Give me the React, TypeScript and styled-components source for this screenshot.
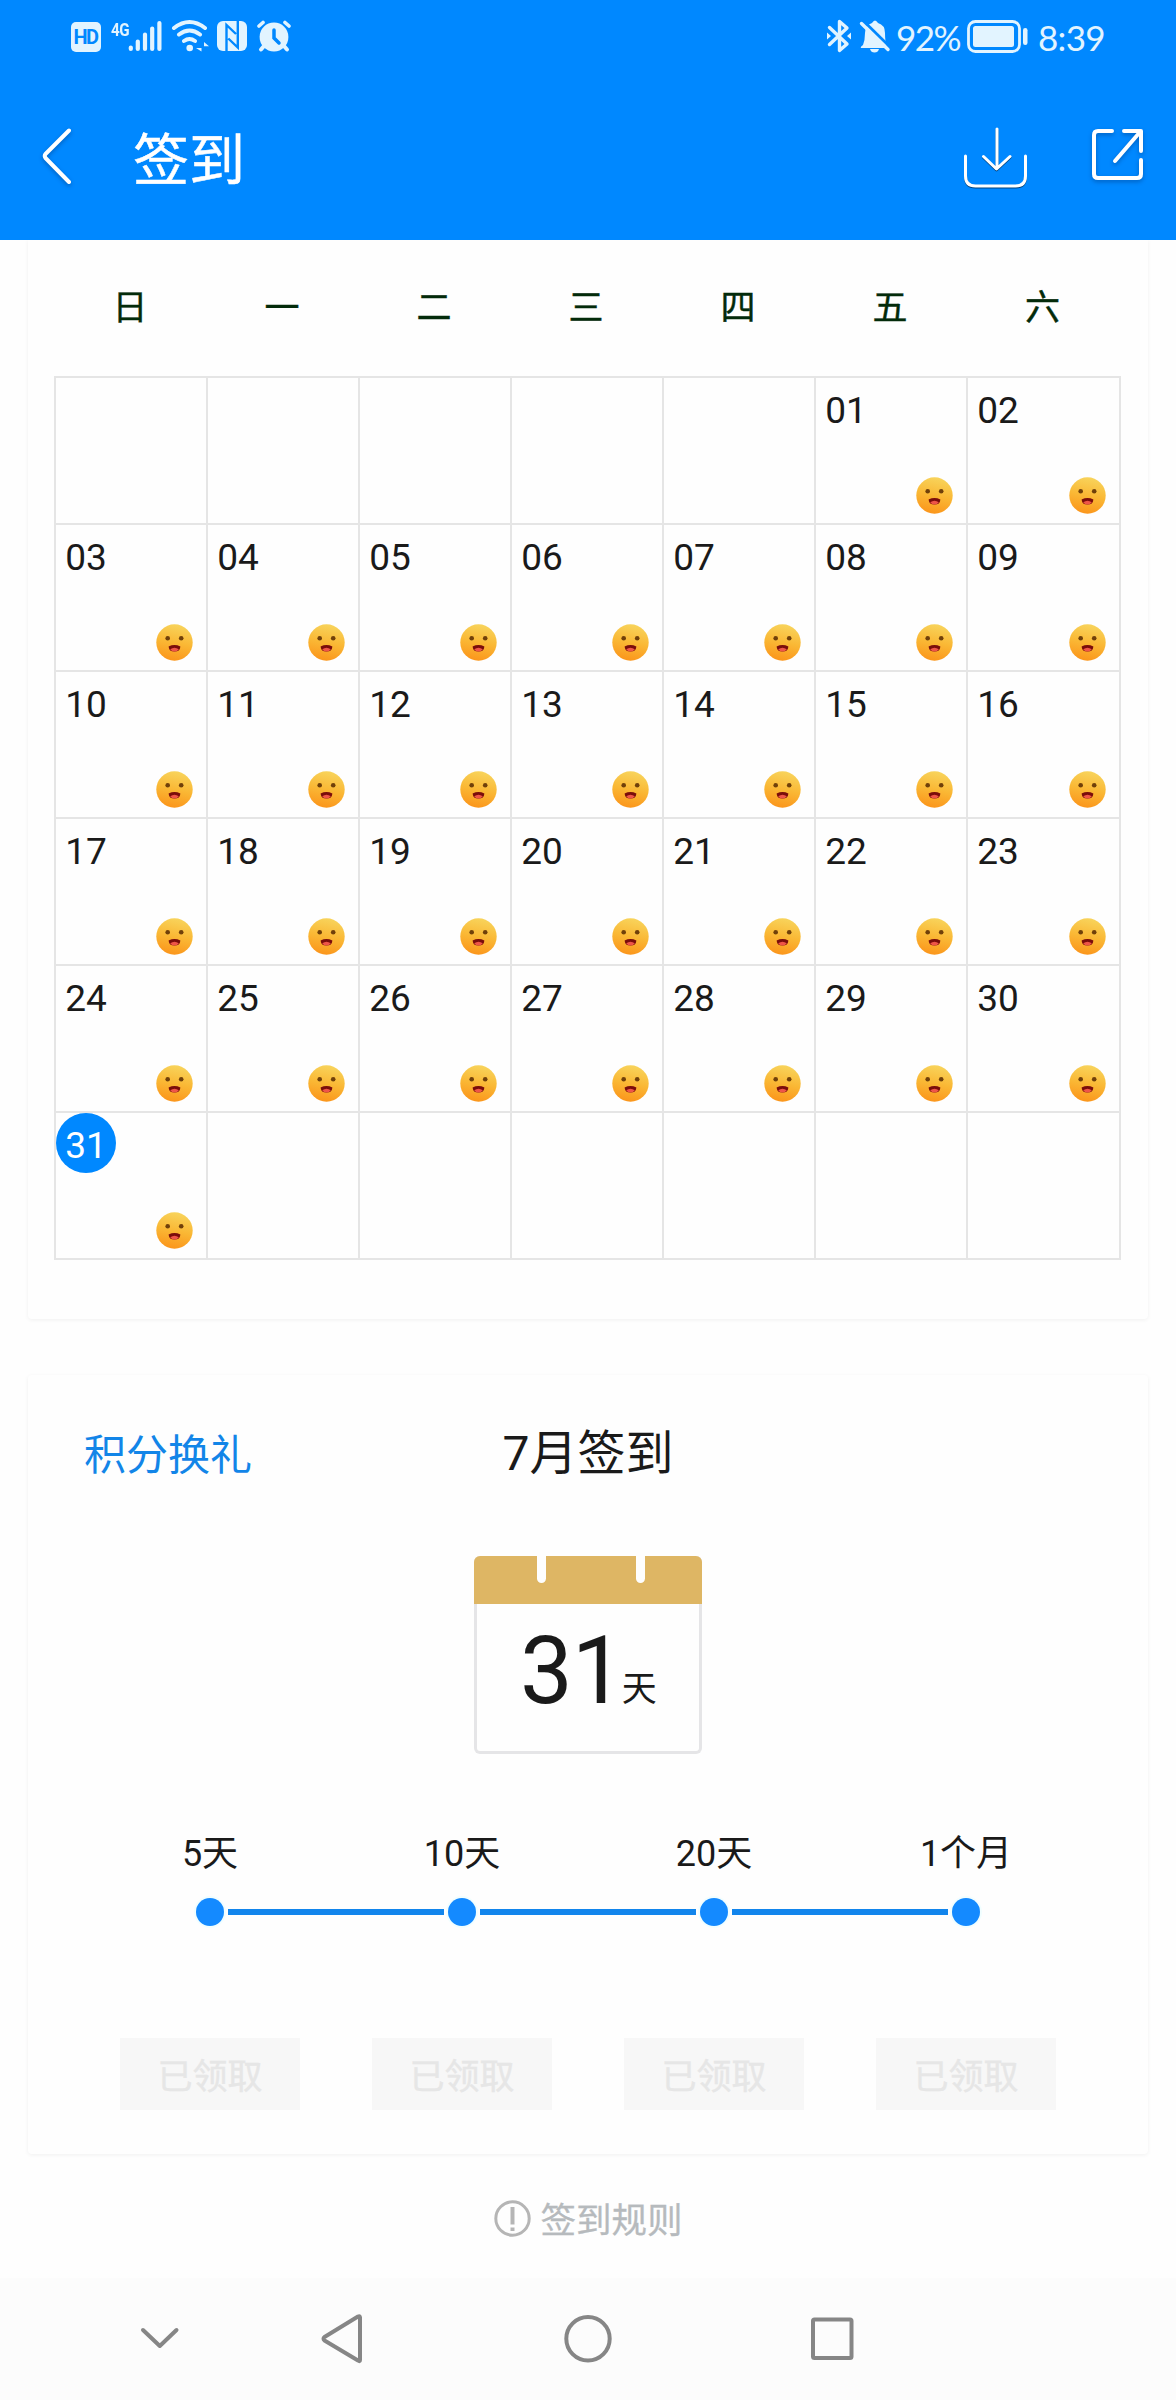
import React from "react";
import styled, { createGlobalStyle } from "styled-components";

const BLUE = "#0088ff";
const INK = "#1a1a1a";
const PALE = "#e2f4ff";

const GlobalStyle = createGlobalStyle`
  * { box-sizing: border-box; }
  body { margin: 0; background: #fefefe; }
`;

const Screen = styled.div`
  width: 1176px;
  height: 2400px;
  display: flex;
  flex-direction: column;
  background: #fefefe;
  color: ${INK};
  font-family: "Noto Sans CJK SC", sans-serif;
  font-size: 36px;
  overflow: hidden;
`;

const StatusBar = styled.div`
  height: 72px;
  flex: none;
  display: flex;
  align-items: flex-start;
  padding: 18px 73px 0 70px;
  background: ${BLUE};
  color: ${PALE};
`;

const StatusIcon = styled.svg<{ $gap?: number }>`
  display: block;
  flex: none;
  height: 36px;
  margin-left: ${(p) => p.$gap ?? 0}px;
`;

const HdBadge = styled.div`
  width: 30px;
  height: 30px;
  margin: 4px 0 0 1px;
  border-radius: 5px;
  background: ${PALE};
  color: ${BLUE};
  font: 700 20px/31px Roboto, sans-serif;
  letter-spacing: -1.5px;
  text-indent: -1px;
  text-align: center;
`;

const NetworkType = styled.div`
  width: 18px;
  margin: 2px 0 0 10px;
  font: 700 19px/19px "Roboto", sans-serif;
  letter-spacing: -0.5px;
  transform: scaleX(0.8);
  transform-origin: left;
`;

const Spacer = styled.div`
  flex: 1;
`;

const StatusText = styled.div<{ $width: number; $gap: number; $track: number }>`
  width: ${(p) => p.$width}px;
  margin-left: ${(p) => p.$gap}px;
  font: 400 35px/38px Lato, sans-serif;
  letter-spacing: ${(p) => p.$track}px;
  white-space: nowrap;
`;

const Header = styled.header`
  height: 168px;
  flex: none;
  display: flex;
  align-items: center;
  padding: 0 28px 0 38px;
  background: ${BLUE};
  color: #fff;
`;

const HeaderIcon = styled.svg<{ $hard?: boolean; $gap?: number }>`
  display: block;
  flex: none;
  height: 72px;
  margin-left: ${(p) => p.$gap ?? 0}px;
  filter: ${(p) =>
    p.$hard
      ? "drop-shadow(0 1.5px 0.5px rgba(0, 30, 60, 0.65))"
      : "drop-shadow(0 2px 2px rgba(0, 30, 80, 0.35))"};
`;

const Title = styled.h1`
  flex: 1;
  margin: 0 0 0 57px;
  font-size: 56px;
  font-weight: 400;
  line-height: 80px;
  -webkit-text-stroke: 0.5px #fff;
`;

const Card = styled.section<{ $first?: boolean }>`
  flex: none;
  margin: ${(p) => (p.$first ? "0 28px" : "56px 28px 0")};
  height: ${(p) => (p.$first ? 1079 : 779)}px;
  padding: 0 26px;
  border-radius: ${(p) => (p.$first ? "0 0 4px 4px" : "4px")};
  background: #fefefe;
  box-shadow: 0 1px 4px rgba(0, 0, 0, 0.06);
`;

const Content = styled.main`
  height: 2038px;
  flex: none;
  overflow: hidden;
`;

const COLUMNS = "repeat(6, 152px) 153px";

const Weekdays = styled.div`
  display: grid;
  grid-template-columns: ${COLUMNS};
  height: 136px;
  color: #032b0a;
  font-size: 35px;
  line-height: 129px;
  text-align: center;
  -webkit-text-stroke: 0.4px #032b0a;
`;

const MonthGrid = styled.div`
  width: 1067px;
  display: grid;
  grid-template-columns: ${COLUMNS};
  grid-auto-rows: 147px;
  border-top: 2px solid #e5e5e5;
  border-left: 2px solid #e5e5e5;
`;

const DayCell = styled.div`
  display: flex;
  justify-content: space-between;
  align-items: flex-start;
  border-right: 2px solid #e5e5e5;
  border-bottom: 2px solid #e5e5e5;
`;

const DayNumber = styled.span<{ $today: boolean }>`
  width: 60px;
  height: 60px;
  border-radius: 50%;
  background: ${(p) => (p.$today ? BLUE : "transparent")};
  color: ${(p) => (p.$today ? "#fff" : INK)};
  font-family: Roboto, sans-serif;
  font-size: 37px;
  line-height: 65px;
  text-align: center;
`;

const Smile = styled.svg`
  align-self: flex-end;
  width: 37px;
  height: 37px;
  margin: 0 13px 9px 0;
`;

const SummaryHead = styled.div`
  display: grid;
  grid-template-columns: 1fr auto 1fr;
  align-items: center;
  height: 154px;
  padding-left: 30px;
`;

const GiftLink = styled.a`
  color: #1285e8;
  font-size: 42px;
  line-height: 60px;
  margin-top: -1px;
`;

const MonthTitle = styled.h2`
  margin: 4px 30px 0 0;
  font-family: Roboto, "Noto Sans CJK SC", sans-serif;
  font-size: 48px;
  font-weight: 400;
  line-height: 70px;
`;

const CalendarBadge = styled.div`
  width: 228px;
  height: 198px;
  margin: 27px auto 0;
  border-radius: 6px;
  border: 3px solid #e5e5e7;
  border-top: 0;
`;

const CalendarTop = styled.div`
  height: 48px;
  margin: 0 -3px;
  padding: 0 57px 0 63px;
  display: flex;
  justify-content: space-between;
  border-radius: 6px 6px 0 0;
  background: #deb664;
`;

const Slot = styled.i`
  width: 9px;
  height: 27px;
  border-radius: 0 0 5px 5px;
  background: #fefefe;
`;

const DayTotal = styled.div`
  display: flex;
  align-items: flex-start;
  height: 144px;
  padding-left: 43px;
`;

const TotalNumber = styled.span`
  font-family: Roboto, sans-serif;
  font-size: 94px;
  line-height: 134px;
  letter-spacing: -1px;
`;

const TotalUnit = styled.span`
  margin-left: -2px;
  font-size: 35px;
  line-height: 163px;
`;

const Steps = styled.div`
  display: grid;
  grid-template-columns: repeat(4, 252px);
  margin-left: 30px;
  padding-top: 72px;
`;

const Step = styled.div`
  display: flex;
  flex-direction: column;
  align-items: center;
`;

const StepLabel = styled.span`
  height: 68px;
  font-family: Roboto, "Noto Sans CJK SC", sans-serif;
  font-size: 36px;
  line-height: 57px;
`;

const Track = styled.div`
  width: 252px;
  height: 36px;
  display: flex;
  align-items: center;
`;

const Rail = styled.i<{ $on: boolean }>`
  flex: 1;
  height: 6px;
  background: ${(p) => (p.$on ? "#1285ec" : "transparent")};
`;

const Dot = styled.i`
  width: 28px;
  height: 28px;
  margin: 0 4px;
  border-radius: 50%;
  background: #148aff;
  box-shadow: 0 0 0 2px #f1feff;
`;

const Claimed = styled.button`
  width: 180px;
  height: 72px;
  margin-top: 108px;
  padding: 0;
  border: 0;
  background: #f7f7f7;
  color: #e6e6e6;
  font: 400 35px/70px "Noto Sans CJK SC", sans-serif;
  -webkit-text-stroke: 0.4px #e6e6e6;
`;

const Rules = styled.div`
  display: flex;
  justify-content: center;
  align-items: center;
  gap: 9px;
  height: 54px;
  margin-top: 37px;
  padding-left: 1px;
  color: #b6babd;
  font-size: 35.5px;
  line-height: 54px;
  -webkit-text-stroke: 0.3px #b6babd;
`;

const NavBar = styled.nav`
  height: 122px;
  flex: none;
  display: flex;
  align-items: center;
  padding: 0 0 0 130px;
  background: #fcfcfc;
`;

const NavIcon = styled.svg<{ $gap?: number }>`
  display: block;
  width: 60px;
  height: 60px;
  margin-left: ${(p) => p.$gap ?? 0}px;
  fill: none;
  stroke: #868686;
  stroke-width: 4;
  stroke-linejoin: round;
  stroke-linecap: round;
`;

const WEEK = ["日", "一", "二", "三", "四", "五", "六"];
const FIRST_OFFSET = 5;
const DAYS = 31;
const STEPS = ["5天", "10天", "20天", "1个月"];

function SignedFace() {
  return (
    <Smile viewBox="0 0 37 37">
      <defs>
        <linearGradient id="face" x1="0.6" y1="0" x2="0.4" y2="1">
          <stop offset="0" stopColor="#f8d45c" />
          <stop offset="0.5" stopColor="#fab835" />
          <stop offset="1" stopColor="#fb951b" />
        </linearGradient>
      </defs>
      <circle cx="18.5" cy="18.5" r="18.2" fill="url(#face)" />
      <circle cx="11.7" cy="14.3" r="2.3" fill="#70400a" />
      <circle cx="25.2" cy="14.3" r="2.3" fill="#70400a" />
      <path d="M12.6 22.4Q18.5 19.8 24.4 22.4Q24 27.6 18.5 27.6Q13 27.6 12.6 22.4Z" fill="#7a0d0b" />
      <path d="M14.2 25.3Q18.5 22 22.8 25.3Q21.3 27.6 18.5 27.6Q15.7 27.6 14.2 25.3Z" fill="#ee5548" />
    </Smile>
  );
}

function Status() {
  return (
    <StatusBar>
      <HdBadge>HD</HdBadge>
      <NetworkType>4G</NetworkType>
      <StatusIcon width="34" viewBox="0 0 34 36" $gap={-1} stroke={PALE} strokeWidth="4.2" strokeLinecap="round">
        <path d="M2.8 29.5V31M9.8 23.5V31M17 16.5V31M24.2 10.5V31M31.4 5V31" />
      </StatusIcon>
      <StatusIcon width="38" viewBox="0 0 38 36" $gap={9} fill="none" stroke={PALE} strokeWidth="4" strokeLinecap="round">
        <path d="M3 10Q18.5-2 34 10M8 16.5Q18.5 8.5 29 16.5M13 23Q18.5 19 24 23" />
        <circle cx="18.7" cy="30" r="3.3" fill={PALE} stroke="none" />
        <path d="M30.5 24V33.5L25 30H30.5ZM33 33.5V24L38 28.2H33Z" fill={PALE} stroke="none" />
      </StatusIcon>
      <StatusIcon width="30" viewBox="0 0 30 36" $gap={8}>
        <rect x="0" y="3" width="30" height="30" rx="6" fill={PALE} />
        <path d="M9.5 33V7L19 16M20.8 3V29.5L11.3 20.5" fill="none" stroke={BLUE} strokeWidth="2.4" />
      </StatusIcon>
      <StatusIcon width="34" viewBox="0 0 34 36" $gap={10} fill="none" stroke={PALE} strokeLinecap="round">
        <circle cx="17" cy="19" r="14.4" fill={PALE} stroke="none" />
        <path d="M2 8L6 4.5M32 8L28 4.5" strokeWidth="3.6" />
        <path d="M7 28L4 31.5M27 28L30 31.5" strokeWidth="4" />
        <path d="M17 12V20L22 25" stroke={BLUE} strokeWidth="3.5" />
      </StatusIcon>
      <Spacer />
      <StatusIcon width="26" viewBox="0 0 26 36" fill="none" stroke={PALE} strokeWidth="3.4" strokeLinejoin="round" strokeLinecap="round">
        <path d="M3.5 9.5L21 26L13.5 32.5V3.5L21 10L3.5 26.5" />
        <path d="M1 14.5L5 18L1 21.5ZM25 14.5L21 18L25 21.5Z" fill={PALE} stroke="none" />
      </StatusIcon>
      <StatusIcon width="32" viewBox="0 0 32 36" $gap={7}>
        <path d="M4 27Q6 22 6 15Q6 7 13 5Q16 0 19 5Q26 7 26 15Q26 24 28 30H2Q1 29 4 27Z" fill={PALE} />
        <path d="M11 31H20Q19 34.5 15.5 34.5Q12 34.5 11 31Z" fill={PALE} />
        <path d="M4.5 3L31 29" stroke={BLUE} strokeWidth="3" />
        <path d="M2.5 5.5L29 31.5" stroke={PALE} strokeWidth="3.4" strokeLinecap="round" />
      </StatusIcon>
      <StatusText $width={64} $gap={5} $track={-1.5}>92%</StatusText>
      <StatusIcon width="62" viewBox="0 0 62 36" $gap={7}>
        <rect x="1.5" y="3.5" width="51" height="30" rx="7" fill="none" stroke={PALE} strokeWidth="2.8" />
        <rect x="6" y="8" width="41" height="21" rx="2.5" fill={PALE} />
        <rect x="56" y="10" width="4.5" height="17" rx="2.2" fill={PALE} />
      </StatusIcon>
      <StatusText $width={65} $gap={9} $track={-0.7}>8:39</StatusText>
    </StatusBar>
  );
}

export default function App() {
  const cells = Array.from({ length: 42 }, (_, i) => i - FIRST_OFFSET + 1);
  return (
    <Screen>
      <GlobalStyle />
      <Status />
      <Header>
        <HeaderIcon width="38" viewBox="0 0 38 72" fill="none" stroke="#fff" strokeWidth="4" strokeLinecap="round" strokeLinejoin="round">
          <path d="M31 10.5L7.5 34Q6 36 7.5 38L31 62" />
        </HeaderIcon>
        <Title>签到</Title>
        <HeaderIcon $hard width="70" viewBox="0 0 70 72" fill="none" stroke="#fff" strokeWidth="3" strokeLinecap="round" strokeLinejoin="round">
          <path d="M5.5 36V56Q5.5 66 15.5 66H55.5Q65.5 66 65.5 56V36M37 9V48M23.5 36.5L36.5 49L50 36.5" />
        </HeaderIcon>
        <HeaderIcon $gap={58} width="60" viewBox="0 0 60 72" fill="none" stroke="#fff" strokeWidth="4" strokeLinecap="round" strokeLinejoin="round">
          <path d="M24 11H10Q6 11 6 15V54Q6 58 10 58H49Q53 58 53 54V40M36 11H53V31M52 12L27 41" />
        </HeaderIcon>
      </Header>
      <Content>
        <Card $first>
          <Weekdays>
            {WEEK.map((d) => (
              <span key={d}>{d}</span>
            ))}
          </Weekdays>
          <MonthGrid>
            {cells.map((day) => (
              <DayCell key={day}>
                {day >= 1 && day <= DAYS && (
                  <>
                    <DayNumber $today={day === 31}>{String(day).padStart(2, "0")}</DayNumber>
                    <SignedFace />
                  </>
                )}
              </DayCell>
            ))}
          </MonthGrid>
        </Card>
        <Card>
          <SummaryHead>
            <GiftLink>积分换礼</GiftLink>
            <MonthTitle>7月签到</MonthTitle>
          </SummaryHead>
          <CalendarBadge>
            <CalendarTop>
              <Slot />
              <Slot />
            </CalendarTop>
            <DayTotal>
              <TotalNumber>31</TotalNumber>
              <TotalUnit>天</TotalUnit>
            </DayTotal>
          </CalendarBadge>
          <Steps>
            {STEPS.map((label, i) => (
              <Step key={label}>
                <StepLabel>{label}</StepLabel>
                <Track>
                  <Rail $on={i > 0} />
                  <Dot />
                  <Rail $on={i < STEPS.length - 1} />
                </Track>
                <Claimed>已领取</Claimed>
              </Step>
            ))}
          </Steps>
        </Card>
        <Rules>
          <svg width="37" height="37" viewBox="0 0 37 37" fill="none" stroke="#b5b5b5">
            <circle cx="18.5" cy="18.5" r="16.7" strokeWidth="3" />
            <path d="M18.5 7V24.5M18.5 27.5V31" strokeWidth="4" />
          </svg>
          签到规则
        </Rules>
      </Content>
      <NavBar>
        <NavIcon viewBox="0 0 60 60">
          <path d="M13 21L29.8 37L46.5 21" />
        </NavIcon>
        <NavIcon $gap={122} viewBox="0 0 60 60">
          <path d="M48 8.5V51Q48 53 46 51.5L12.5 31.5Q10.5 29.8 12.5 28L46 7.5Q48 6.5 48 8.5Z" />
        </NavIcon>
        <NavIcon $gap={186} viewBox="0 0 60 60">
          <circle cx="30" cy="29.8" r="21.7" />
        </NavIcon>
        <NavIcon $gap={184} viewBox="0 0 60 60">
          <rect x="11" y="10.5" width="38.5" height="38.5" rx="1.5" />
        </NavIcon>
      </NavBar>
    </Screen>
  );
}
